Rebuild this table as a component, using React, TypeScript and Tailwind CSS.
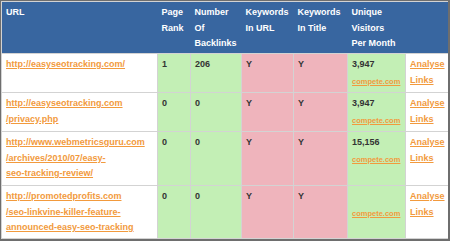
import React from "react";

type Row = {
  url: string[];
  pr: string;
  bl: string;
  visitors: string;
  h: string;
};

const rows: Row[] = [
  { url: ["http://easyseotracking.com/"], pr: "1", bl: "206", visitors: "3,947", h: "h-[39px]" },
  { url: ["http://easyseotracking.com", "/privacy.php"], pr: "0", bl: "0", visitors: "3,947", h: "h-[39px]" },
  {
    url: ["http://www.webmetricsguru.com", "/archives/2010/07/easy-", "seo-tracking-review/"],
    pr: "0",
    bl: "0",
    visitors: "15,156",
    h: "h-[54px]",
  },
  {
    url: ["http://promotedprofits.com", "/seo-linkvine-killer-feature-", "announced-easy-seo-tracking"],
    pr: "0",
    bl: "0",
    visitors: "",
    h: "h-[53px]",
  },
];

const pad = "align-top pl-[4px] pr-[2px] pt-[3px] pb-0";
const cell = `border border-[#d3d3d3] ${pad}`;
const hcell = `border-x-0 border-y border-y-[#d3d3d3] bg-[#3866a0] text-left font-bold ${pad}`;
const link = "text-[#f29a3d] underline decoration-1 underline-offset-1";

export default function App() {
  return (
    <div
      className="w-[450px] h-[241px] bg-white border-t border-l border-r-2 border-b-2 border-[#6e6e6e] overflow-hidden"
      style={{ fontFamily: '"Liberation Sans", Arial, sans-serif' }}
    >
      <table className="table-fixed border-collapse w-[447px] text-[9px] leading-[15.5px] font-bold text-[#333]">
        <colgroup>
          <col className="w-[156px]" />
          <col className="w-[33px]" />
          <col className="w-[51px]" />
          <col className="w-[52px]" />
          <col className="w-[54px]" />
          <col className="w-[58px]" />
          <col className="w-[43px]" />
        </colgroup>
        <thead>
          <tr className="h-[52px] text-white">
            <th className={`${hcell} border-l border-l-[#d3d3d3]`}>URL</th>
            <th className={hcell}>
              Page
              <br />
              Rank
            </th>
            <th className={hcell}>
              Number
              <br />
              Of
              <br />
              Backlinks
            </th>
            <th className={hcell}>
              Keywords
              <br />
              In URL
            </th>
            <th className={hcell}>
              Keywords
              <br />
              In Title
            </th>
            <th className={hcell}>
              Unique
              <br />
              Visitors
              <br />
              Per Month
            </th>
            <th className={`${hcell} border-r border-r-[#d3d3d3]`}></th>
          </tr>
        </thead>
        <tbody>
          {rows.map((r, i) => (
            <tr key={i} className={r.h}>
              <td className={`${cell} bg-white`}>
                {r.url.map((u, j) => (
                  <div key={j} className="whitespace-nowrap">
                    <span className={link}>{u}</span>
                  </div>
                ))}
              </td>
              <td className={`${cell} bg-[#c3efb5]`}>{r.pr}</td>
              <td className={`${cell} bg-[#c3efb5]`}>{r.bl}</td>
              <td className={`${cell} bg-[#efb4bc]`}>Y</td>
              <td className={`${cell} bg-[#efb4bc]`}>Y</td>
              <td className={`${cell} bg-[#c3efb5]`}>
                <div className="h-[16px]">{r.visitors}</div>
                <div className="leading-[16px]">
                  <span className={`${link} text-[7.5px]`}>compete.com</span>
                </div>
              </td>
              <td className={`${cell} bg-white`}>
                <div>
                  <span className={link}>Analyse</span>
                </div>
                <div>
                  <span className={link}>Links</span>
                </div>
              </td>
            </tr>
          ))}
        </tbody>
      </table>
    </div>
  );
}
